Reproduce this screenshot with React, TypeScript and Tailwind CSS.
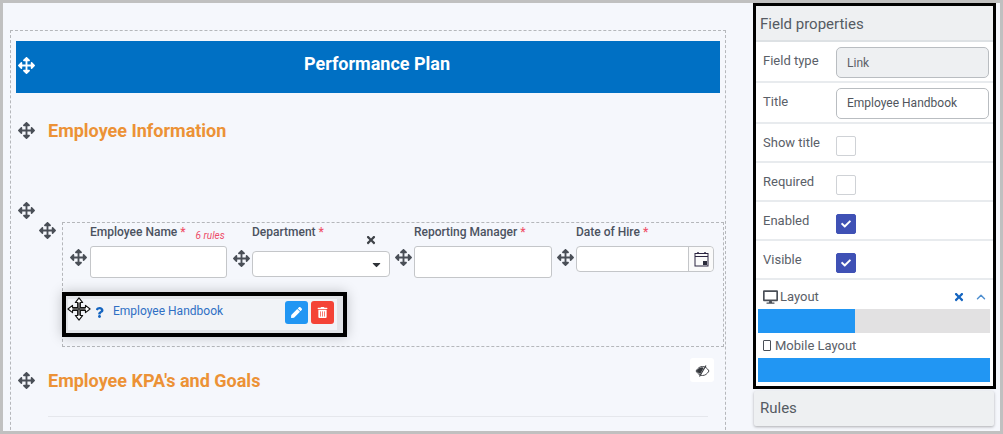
import React from "react";
import { FaArrowsAlt, FaPen, FaTrashAlt, FaQuestion, FaTimes, FaCheck, FaDesktop, FaCaretDown } from "react-icons/fa";
import { ChevronUp } from "lucide-react";

const font = { fontFamily: "Roboto, 'Liberation Sans', sans-serif" };

function Move({ className = "text-[#4a4f57]" }: { className?: string }) {
  return <FaArrowsAlt className={`w-[17px] h-[17px] shrink-0 ${className}`} />;
}

function Cursor() {
  return (
    <svg width="24" height="24" viewBox="0 0 26 26" className="absolute left-[1px] top-[1px]">
      <path
        d="M13 1 L17 6 H14.5 V11.5 H20 V9 L25 13 L20 17 V14.5 H14.5 V20 H17 L13 25 L9 20 H11.5 V14.5 H6 V17 L1 13 L6 9 V11.5 H11.5 V6 H9 Z"
        fill="#fff"
        stroke="#111"
        strokeWidth="1.2"
        strokeLinejoin="round"
      />
      <path d="M13 6V20M6 13H20" stroke="#333" strokeWidth="1.6" />
    </svg>
  );
}

function EyeOff() {
  return (
    <svg width="15" height="12" viewBox="0 0 15 12" fill="none" className="ml-[1px] mt-[1px]">
      <path d="M1 6C3 2.8 5 1.5 7.5 1.5S12 2.8 14 6C12 9.2 10 10.5 7.5 10.5S3 9.2 1 6Z" stroke="#33363b" strokeWidth="0.9" />
      <path d="M1.5 6C3 3.6 4.8 2.2 7.5 2.2L8.6 3L5.4 8.8C3.9 8.4 2.6 7.4 1.5 6Z" fill="#33363b" />
      <path d="M11 0.5L4.5 11.5" stroke="#33363b" strokeWidth="1.1" />
    </svg>
  );
}

function Field({ label, children, rules }: { label: string; children: React.ReactNode; rules?: boolean }) {
  return (
    <div className="w-[162px] shrink-0">
      <div className="h-[16px] pl-[20px] text-[12px] leading-[16px] font-medium text-[#4b5260] whitespace-nowrap flex items-baseline">
        {label} <span className="text-[#f0526a] ml-[3px]">*</span>
        {rules && (
          <span className="ml-[10px] text-[10px] italic font-normal text-[#ee4d6a] relative top-[3px]">6 rules</span>
        )}
      </div>
      {children}
    </div>
  );
}

function Row({ label, children, h }: { label: string; children: React.ReactNode; h: string }) {
  return (
    <div className={`flex border-b-[2px] border-[#e8ebee] ${h}`}>
      <div className="w-[80px] pl-[7px] shrink-0 text-[13px] leading-[16px] pt-[11px] text-[#5a6068]">{label}</div>
      {children}
    </div>
  );
}

function Check({ on }: { on?: boolean }) {
  return (
    <div
      className={`w-[20px] h-[20px] mt-[12px] rounded-[2px] border flex items-center justify-center ${
        on ? "bg-[#3f51b5] border-[#3f51b5]" : "bg-white border-[#cfd2d6]"
      }`}
    >
      {on && <FaCheck className="w-[10px] h-[10px] text-white" />}
    </div>
  );
}

export default function App() {
  return (
    <div
      style={font}
      className="w-[1003px] h-[434px] overflow-hidden border-[3px] border-[#c0c0c0] bg-[#f5f7fc] flex relative"
    >
      {/* canvas */}
      <div className="w-[750px] shrink-0 pl-[7px] pt-[27px]">
        <div className="w-[716px] h-[420px] border border-dashed border-[#b5b7bb] pl-[5px] pt-[10px]">
          <div className="w-[704px] h-[52px] bg-[#0070c4] flex items-center pl-[2px] pb-[4px] relative">
            <Move className="text-white" />
            <div className="absolute inset-0 flex items-center justify-center text-white text-[18px] font-bold pb-[8px] pl-[18px]">
              Performance Plan
            </div>
          </div>

          <div className="mt-[25px] h-[24px] flex items-center pl-[2px] gap-[13px]">
            <Move />
            <h2 className="text-[18px] font-bold text-[#ec9236]">Employee Information</h2>
          </div>

          <div className="mt-[60px] pl-[2px]">
            <Move />
          </div>

          <div className="flex mt-[3px]">
            <div className="pl-[23px] w-[46px] shrink-0">
              <Move />
            </div>
            <div className="w-[662px] h-[125px] border border-dashed border-[#b5b7bb] shrink-0">
              <div className="flex pl-[7px] pt-[1px]">
                <Field label="Employee Name" rules>
                  <div className="flex items-start mt-[6px]">
                    <div className="w-[20px] pt-[3px]"><Move /></div>
                    <div className="w-[137px] h-[32px] bg-white border border-[#c4c6c9] rounded-[3px]" />
                  </div>
                </Field>
                <Field label="Department">
                  <div className="relative flex items-start mt-[11px]">
                    <FaTimes className="absolute left-[133px] top-[-17px] w-[12px] h-[12px] text-[#3f4349]" />
                    <div className="w-[20px] -mt-[1px] pl-[1px]"><Move /></div>
                    <div className="w-[138px] h-[26px] bg-white border border-[#c4c6c9] rounded-[4px] flex items-center justify-end pr-[6px]">
                      <FaCaretDown className="w-[13px] h-[13px] text-[#2f3338]" />
                    </div>
                  </div>
                </Field>
                <Field label="Reporting Manager">
                  <div className="flex items-start mt-[6px]">
                    <div className="w-[20px] pt-[3px] pl-[1px]"><Move /></div>
                    <div className="w-[138px] h-[32px] bg-white border border-[#c4c6c9] rounded-[3px]" />
                  </div>
                </Field>
                <Field label="Date of Hire">
                  <div className="flex items-start mt-[6px]">
                    <div className="w-[20px] pt-[3px] pl-[1px]"><Move /></div>
                    <div className="w-[138px] h-[26px] bg-white border border-[#c4c6c9] rounded-[4px] flex justify-end">
                      <div className="w-[25px] border-l border-[#c4c6c9] bg-[#fafafa] rounded-r-[4px] flex items-center justify-center">
                        <svg width="15" height="16" viewBox="0 0 15 16" fill="none">
                          <rect x="1" y="2.5" width="13" height="12.5" stroke="#2b2440" strokeWidth="1" />
                          <path d="M1 5.5H14" stroke="#2b2440" />
                          <path d="M4 1V3M11 1V3" stroke="#2b2440" strokeWidth="1.4" />
                          <rect x="9" y="10" width="4" height="4" fill="#2b2b3a" />
                        </svg>
                      </div>
                    </div>
                  </div>
                </Field>
              </div>

              <div className="w-[285px] h-[45px] mt-[14px] ml-[-1px] border-[4px] border-black bg-[#e2e4e8] shadow-[0_0_12px_rgba(0,0,0,0.22)] pl-[2px] pr-[6px] py-[3px] relative">
                <div className="h-full bg-[#f1f3f7] flex items-center pl-[27px] pr-[3px]">
                  <FaQuestion className="w-[9px] h-[11px] text-[#1565c0] mb-[5px]" />
                  <span className="ml-[9px] text-[12px] text-[#2f6fc4] mb-[7px]">Employee Handbook</span>
                  <div className="ml-auto flex gap-[3px] mb-[4px]">
                    <div className="w-[23px] h-[23px] rounded-[3px] bg-[#2196f3] flex items-center justify-center">
                      <FaPen className="w-[11px] h-[11px] text-white" />
                    </div>
                    <div className="w-[23px] h-[23px] rounded-[3px] bg-[#f44336] flex items-center justify-center">
                      <FaTrashAlt className="w-[11px] h-[11px] text-white" />
                    </div>
                  </div>
                </div>
                <Cursor />
              </div>
            </div>
          </div>

          <div className="mt-[21px] h-[24px] flex items-center pl-[2px] gap-[13px] relative">
            <Move />
            <h2 className="text-[18px] font-bold text-[#ec9236]">Employee KPA's and Goals</h2>
            <div className="absolute left-[674px] top-[-10px] w-[24px] h-[24px] bg-white rounded-[3px] flex items-center justify-center">
              <EyeOff />
            </div>
          </div>
          <div className="ml-[32px] mt-[24px] w-[660px] border-t border-[#e5e7ec]" />
        </div>
      </div>

      {/* properties */}
      <div className="w-[243px] shrink-0">
        <div className="h-[386px] border-[3px] border-black bg-white">
          <div className="h-[36px] bg-[#eef0f2] border-b-[2px] border-[#dde1e4] pl-[4px] text-[15px] leading-[36px] text-[#555b63]">
            Field properties
          </div>
          <Row label="Field type" h="h-[41px]">
            <div className="w-[153px] h-[31px] mt-[5px] rounded-[5px] border border-[#b9bdc1] bg-[#eef0f2] pl-[10px] text-[12px] leading-[31px] text-[#5b6068]">
              Link
            </div>
          </Row>
          <Row label="Title" h="h-[41px]">
            <div className="w-[153px] h-[31px] mt-[5px] rounded-[5px] border border-[#b9bdc1] bg-white pl-[10px] text-[12px] leading-[29px] text-[#50555d]">
              Employee Handbook
            </div>
          </Row>
          <Row label="Show title" h="h-[39px]"><Check /></Row>
          <Row label="Required" h="h-[39px]"><Check /></Row>
          <Row label="Enabled" h="h-[39px]"><Check on /></Row>
          <Row label="Visible" h="h-[39px]"><Check on /></Row>
          <div className="pl-[2px] pr-[3px]">
            <div className="h-[29px] flex items-center pl-[5px] pt-[4px] text-[13px] text-[#5a6068]">
              <FaDesktop className="w-[15px] h-[14px] text-[#4a4f57] mr-[2px]" />
              Layout
              <FaTimes className="ml-auto w-[12px] h-[12px] text-[#1565c0]" />
              <ChevronUp strokeWidth={2.5} className="ml-[9px] mr-[2px] w-[14px] h-[14px] text-[#4f8fd0]" />
            </div>
            <div className="h-[24px] bg-[#e2e1e2] w-[232px]">
              <div className="h-full w-[97px] bg-[#2196f3]" />
            </div>
            <div className="h-[25px] flex items-center pl-[5px] text-[13px] text-[#5a6068]">
              <div className="w-[8px] h-[11px] border border-[#4a4f57] rounded-[1px] mr-[4px]" />
              Mobile Layout
            </div>
            <div className="h-[24px] bg-[#2196f3] w-[232px]" />
          </div>
        </div>
        <div className="mt-[2px] ml-[1px] w-[240px] h-[35px] bg-[#eef0f2] rounded-[2px] shadow-[0_1px_3px_rgba(0,0,0,0.3)] pl-[6px] text-[15px] leading-[35px] text-[#555b63]">
          Rules
        </div>
      </div>
    </div>
  );
}
